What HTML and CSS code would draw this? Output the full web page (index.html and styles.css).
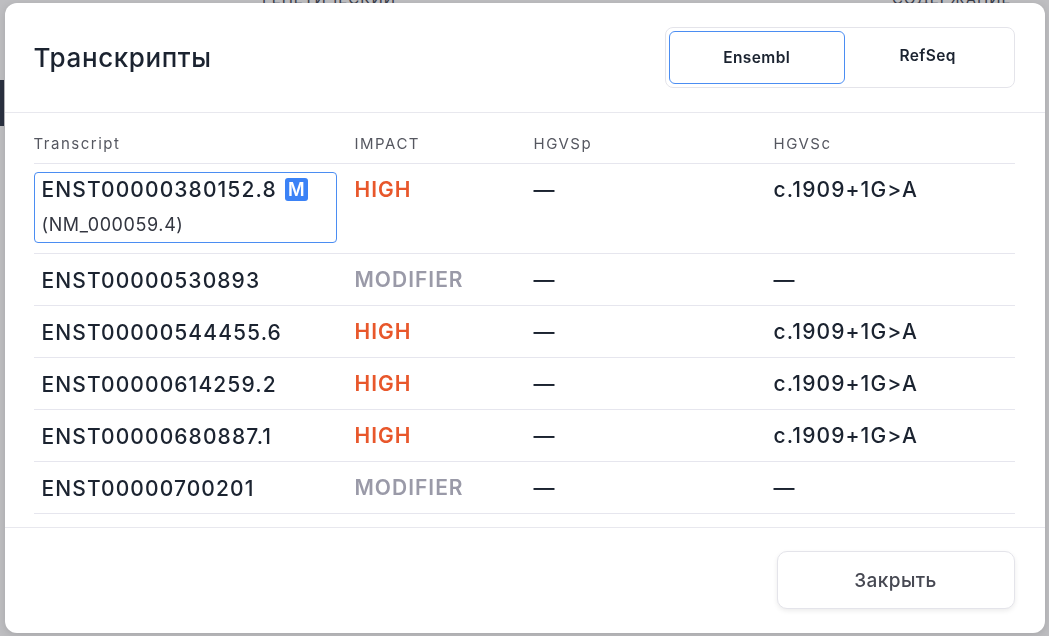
FILE: index.html
```html
<!DOCTYPE html>
<html lang="ru">
<head>
<meta charset="utf-8">
<title>Транскрипты</title>
<link rel="stylesheet" href="styles.css">
</head>
<body>
<div class="page">
  <div class="page-top">
    <span class="page-tab t1">ГЕНЕТИЧЕСКИЙ</span>
    <span class="page-tab t2">СОДЕРЖАНИЕ</span>
  </div>
  <div class="page-mark"></div>
</div>
<div class="overlay">
  <div class="modal">
    <div class="modal-header">
      <h2 class="modal-title">Транскрипты</h2>
      <div class="toggle">
        <button class="toggle-btn active">Ensembl</button>
        <button class="toggle-btn">RefSeq</button>
      </div>
    </div>
    <div class="modal-body">
      <table class="tx-table">
        <colgroup>
          <col class="c1"><col class="c2"><col class="c3"><col class="c4">
        </colgroup>
        <thead>
          <tr><th>Transcript</th><th>IMPACT</th><th>HGVSp</th><th>HGVSc</th></tr>
        </thead>
        <tbody>
          <tr class="row-selected">
            <td><div class="tx selected"><div class="tx-id">ENST00000380152.8<span class="badge">M</span></div><div class="tx-ref">(NM_000059.4)</div></div></td>
            <td><div class="cell high">HIGH</div></td>
            <td><div class="cell">—</div></td>
            <td><div class="cell">c.1909+1G&gt;A</div></td>
          </tr>
          <tr>
            <td><div class="tx"><div class="tx-id">ENST00000530893</div></div></td>
            <td><div class="cell modifier">MODIFIER</div></td>
            <td><div class="cell">—</div></td>
            <td><div class="cell">—</div></td>
          </tr>
          <tr>
            <td><div class="tx"><div class="tx-id">ENST00000544455.6</div></div></td>
            <td><div class="cell high">HIGH</div></td>
            <td><div class="cell">—</div></td>
            <td><div class="cell">c.1909+1G&gt;A</div></td>
          </tr>
          <tr>
            <td><div class="tx"><div class="tx-id">ENST00000614259.2</div></div></td>
            <td><div class="cell high">HIGH</div></td>
            <td><div class="cell">—</div></td>
            <td><div class="cell">c.1909+1G&gt;A</div></td>
          </tr>
          <tr>
            <td><div class="tx"><div class="tx-id">ENST00000680887.1</div></div></td>
            <td><div class="cell high">HIGH</div></td>
            <td><div class="cell">—</div></td>
            <td><div class="cell">c.1909+1G&gt;A</div></td>
          </tr>
          <tr>
            <td><div class="tx"><div class="tx-id">ENST00000700201</div></div></td>
            <td><div class="cell modifier">MODIFIER</div></td>
            <td><div class="cell">—</div></td>
            <td><div class="cell">—</div></td>
          </tr>
        </tbody>
      </table>
    </div>
    <div class="modal-footer">
      <button class="close-btn">Закрыть</button>
    </div>
  </div>
</div>
</body>
</html>
```

FILE: styles.css
```css
* { box-sizing: border-box; }
html, body { margin: 0; padding: 0; }
body {
  width: 1049px;
  height: 636px;
  overflow: hidden;
  background: #bebec1;
  font-family: Inter, "Noto Sans", "Liberation Sans", sans-serif;
  color: #1b2330;
}
.page { height: 636px; }
.page-top {
  height: 4px;
  overflow: hidden;
  position: relative;
}
.page-tab {
  position: absolute;
  top: -11px;
  font-size: 15px;
  letter-spacing: 1px;
  color: #3a3d4a;
}
.page-tab.t1 { left: 262px; }
.page-tab.t2 { left: 892px; }
.page-mark {
  margin-top: 76px;
  width: 4px;
  height: 46px;
  background: #2a3140;
}
.overlay {
  position: fixed;
  inset: 0;
  display: flex;
  align-items: center;
  justify-content: center;
}
.modal {
  width: 1040px;
  height: 630px;
  background: #fff;
  border-radius: 12px;
  box-shadow: 0 2px 8px rgba(0,0,0,0.12);
  display: flex;
  flex-direction: column;
  overflow: hidden;
}
.modal-header {
  display: flex;
  align-items: center;
  justify-content: space-between;
  padding: 24px 30px 24px 30px;
  border-bottom: 1px solid #e8e8ee;
}
.modal-title {
  margin: 0 0 0 -1px;
  font-size: 26px;
  font-weight: 500;
  letter-spacing: 0.6px;
  color: #1b2330;
}
.toggle {
  display: flex;
  width: 350px;
  height: 61px;
  padding: 3px;
  border: 1px solid #e4e4ea;
  border-radius: 8px;
  background: #fff;
}
.toggle-btn {
  flex: 1 1 auto;
  border: 1px solid transparent;
  border-radius: 6px;
  background: transparent;
  font-family: inherit;
  font-size: 15.5px;
  font-weight: 600;
  letter-spacing: 0.4px;
  color: #1b2330;
  padding: 0 10px 4px 10px;
}
.toggle-btn.active {
  border-color: #4b8df2;
  padding-bottom: 0;
}
.modal-body {
  flex: 1 1 auto;
  padding: 21px 30px 11px 30px;
  border-bottom: 1px solid #e8e8ee;
}
.tx-table {
  width: 981px;
  margin-left: -1px;
  border-collapse: collapse;
  table-layout: fixed;
}
.c1 { width: 321px; }
.c2 { width: 179px; }
.c3 { width: 240px; }
.c4 { width: 241px; }
.tx-table th {
  text-align: left;
  font-size: 15px;
  font-weight: 400;
  letter-spacing: 1.5px;
  color: #555760;
  line-height: 20px;
  padding: 0 0 9px 0;
  border-bottom: 1px solid #e6e6ee;
}
.tx-table td {
  vertical-align: top;
  padding: 8px 0 7px 0;
  border-bottom: 1px solid #e6e6ee;
}
.tx-table .row-selected td { padding-bottom: 10px; }
.tx {
  width: 303px;
  border: 1px solid transparent;
  border-radius: 4px;
  padding: 5px 7px 4px 7px;
}
.tx.selected { border-color: #4b8df2; padding: 4px 7px 5px 7px; }
.tx-id, .cell {
  font-size: 21px;
  font-weight: 500;
  line-height: 25px;
  letter-spacing: 1.1px;
  color: #1b2330;
  display: flex;
  align-items: center;
}
.cell { padding-top: 5px; }
.badge {
  display: inline-flex;
  align-items: center;
  justify-content: center;
  width: 23px;
  height: 23px;
  margin-left: 8px;
  border-radius: 3px;
  background: #3b82f6;
  color: #fff;
  font-size: 18px;
  font-weight: 600;
  letter-spacing: 0;
}
.tx-ref {
  margin-top: 10px;
  font-size: 18px;
  line-height: 25px;
  letter-spacing: 0.6px;
  color: #333640;
}
.high { color: #e8572b; font-weight: 600; letter-spacing: 1px; }
.modifier { color: #9a9aa8; font-weight: 600; letter-spacing: 1px; }
.modal-footer {
  display: flex;
  justify-content: flex-end;
  padding: 23px 30px 24px 30px;
}
.close-btn {
  width: 238px;
  height: 58px;
  border: 1px solid #e4e4ea;
  border-radius: 10px;
  background: #fff;
  box-shadow: 0 2px 5px rgba(0,0,0,0.08);
  font-family: inherit;
  font-size: 19px;
  font-weight: 500;
  letter-spacing: 0.4px;
  color: #464852;
}
```
